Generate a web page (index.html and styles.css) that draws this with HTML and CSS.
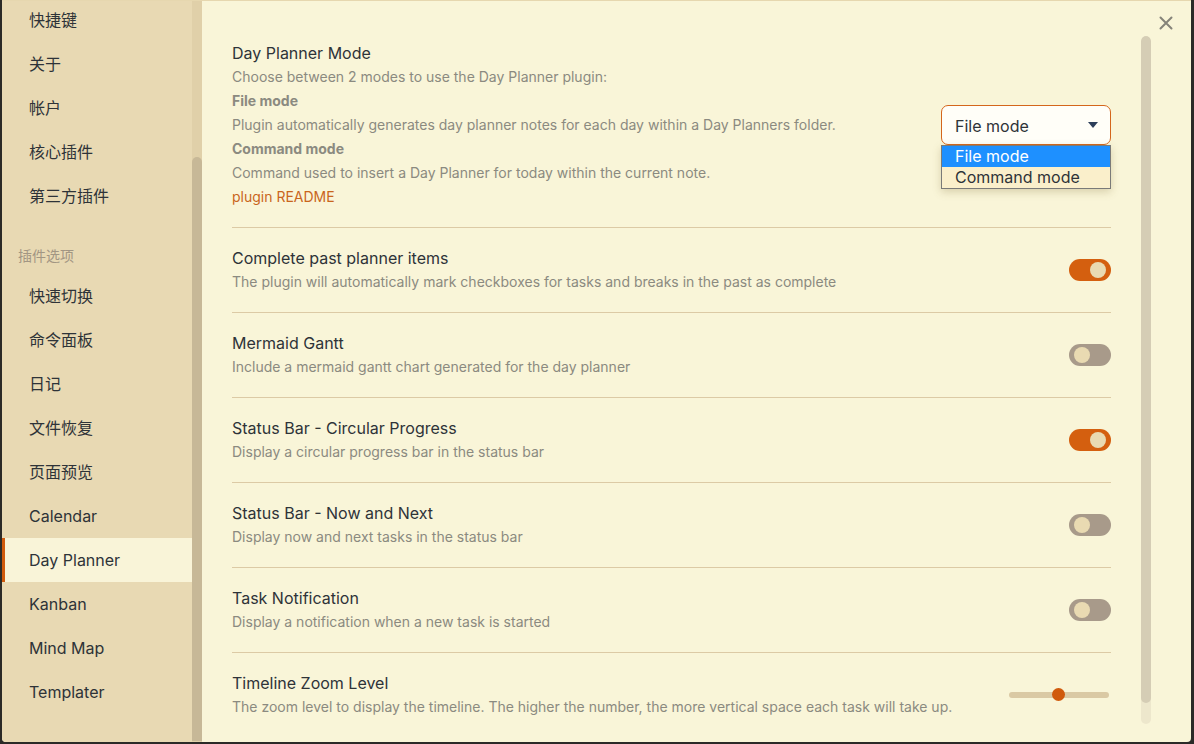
FILE: index.html
```html
<!DOCTYPE html>
<html>
<head>
<meta charset="utf-8">
<link rel="stylesheet" href="styles.css">
</head>
<body>
<div class="modal">
  <aside class="sidebar">
    <nav class="nav">
      <div class="nav-item">快捷键</div>
      <div class="nav-item">关于</div>
      <div class="nav-item">帐户</div>
      <div class="nav-item">核心插件</div>
      <div class="nav-item">第三方插件</div>
      <div class="nav-header">插件选项</div>
      <div class="nav-item">快速切换</div>
      <div class="nav-item">命令面板</div>
      <div class="nav-item">日记</div>
      <div class="nav-item">文件恢复</div>
      <div class="nav-item">页面预览</div>
      <div class="nav-item">Calendar</div>
      <div class="nav-item active">Day Planner</div>
      <div class="nav-item">Kanban</div>
      <div class="nav-item">Mind Map</div>
      <div class="nav-item">Templater</div>
    </nav>
    <div class="side-scroll"><div class="side-thumb"></div></div>
  </aside>
  <main class="main">
    <div class="content">
      <div class="setting first">
        <div class="info">
          <div class="name">Day Planner Mode</div>
          <div class="desc">
            <div>Choose between 2 modes to use the Day Planner plugin:</div>
            <div class="strong">File mode</div>
            <div>Plugin automatically generates day planner notes for each day within a Day Planners folder.</div>
            <div class="strong">Command mode</div>
            <div>Command used to insert a Day Planner for today within the current note.</div>
            <div class="link">plugin README</div>
          </div>
        </div>
        <div class="control">
          <div class="select">
            <span>File mode</span>
            <svg class="caret" width="10" height="6" viewBox="0 0 10 6"><path d="M0 0 H10 L5 6 Z" fill="#2c3e5a"/></svg>
            <div class="options">
              <div class="opt sel">File mode</div>
              <div class="opt">Command mode</div>
            </div>
          </div>
        </div>
      </div>
      <div class="setting">
        <div class="info">
          <div class="name">Complete past planner items</div>
          <div class="desc">The plugin will automatically mark checkboxes for tasks and breaks in the past as complete</div>
        </div>
        <div class="control"><div class="toggle on"><i></i></div></div>
      </div>
      <div class="setting">
        <div class="info">
          <div class="name">Mermaid Gantt</div>
          <div class="desc">Include a mermaid gantt chart generated for the day planner</div>
        </div>
        <div class="control"><div class="toggle"><i></i></div></div>
      </div>
      <div class="setting">
        <div class="info">
          <div class="name">Status Bar - Circular Progress</div>
          <div class="desc">Display a circular progress bar in the status bar</div>
        </div>
        <div class="control"><div class="toggle on"><i></i></div></div>
      </div>
      <div class="setting">
        <div class="info">
          <div class="name">Status Bar - Now and Next</div>
          <div class="desc">Display now and next tasks in the status bar</div>
        </div>
        <div class="control"><div class="toggle"><i></i></div></div>
      </div>
      <div class="setting">
        <div class="info">
          <div class="name">Task Notification</div>
          <div class="desc">Display a notification when a new task is started</div>
        </div>
        <div class="control"><div class="toggle"><i></i></div></div>
      </div>
      <div class="setting">
        <div class="info">
          <div class="name">Timeline Zoom Level</div>
          <div class="desc">The zoom level to display the timeline. The higher the number, the more vertical space each task will take up.</div>
        </div>
        <div class="control"><div class="slider"><i></i></div></div>
      </div>
    </div>
    <div class="main-scroll"><div class="main-thumb"></div></div>
    <svg class="close" width="14" height="14" viewBox="0 0 14 14"><path d="M1.5 1.5 L12.5 12.5 M12.5 1.5 L1.5 12.5" stroke="#858379" stroke-width="2" stroke-linecap="round"/></svg>
  </main>
</div>
</body>
</html>
```
FILE: styles.css
```css
html, body {
  margin: 0;
  padding: 0;
  background: #2b2a27;
  width: 1194px;
  height: 744px;
  overflow: hidden;
}
.modal {
  display: flex;
  margin: 0 3px 0 2px;
  height: 742px;
  background: #f9f5d8;
  border-top: 1px solid #e6d7af;
  box-sizing: border-box;
  border-radius: 0 0 4px 4px;
  overflow: hidden;
  font-family: Inter, "Noto Sans CJK SC", sans-serif;
  color: #2e3338;
}
.sidebar {
  width: 200px;
  flex: none;
  display: flex;
  background: #e8d9b3;
}
.nav {
  flex: 1;
  margin-top: -3px;
}
.nav-item {
  height: 44px;
  line-height: 44px;
  font-size: 16px;
  padding-left: 27px;
  box-sizing: border-box;
}
.nav-item.active {
  background: #f9f4d8;
  border-left: 3px solid #d05a0c;
  padding-left: 24px;
}
.nav-header {
  font-size: 14px;
  color: #a29683;
  padding-left: 16px;
  height: 56px;
  line-height: 20px;
  padding-top: 28px;
  box-sizing: border-box;
}
.side-scroll {
  width: 10px;
  flex: none;
  background: #e0d0a9;
  display: flex;
  flex-direction: column;
  justify-content: flex-end;
}
.side-thumb {
  height: 584px;
  margin-bottom: 1px;
  background: #c7b897;
  border-radius: 5px 5px 0 0;
}
.main {
  flex: 1;
  display: flex;
  position: relative;
  padding-left: 30px;
}
.content {
  width: 879px;
  flex: none;
  padding-top: 22px;
}
.setting {
  display: flex;
  align-items: center;
  padding: 18px 0;
  border-top: 1px solid #dccaa5;
}
.setting.first {
  border-top: none;
}
.info {
  flex: 1;
}
.name {
  font-size: 16px;
  line-height: 24px;
  color: #2e3338;
}
.desc {
  font-size: 14px;
  line-height: 24px;
  color: #8b8a80;
}
.desc .strong {
  font-weight: 700;
}
.desc .link {
  color: #c9651c;
}
.control {
  flex: none;
  display: flex;
  align-items: center;
}
.select {
  position: relative;
  width: 170px;
  height: 40px;
  box-sizing: border-box;
  border: 1px solid #d4661c;
  border-radius: 7px;
  background: #fffef8;
  display: flex;
  align-items: center;
  justify-content: space-between;
  padding: 0 12px 0 13px;
  font-size: 16px;
  color: #2e3338;
}
.select span {
  padding-top: 2px;
}
.options {
  position: absolute;
  left: -1px;
  top: 39px;
  width: 170px;
  box-sizing: border-box;
  border: 1px solid #7a7a78;
  background: #faefcb;
  box-shadow: 0 3px 8px rgba(120, 100, 40, 0.25);
}
.opt {
  height: 21px;
  line-height: 21px;
  padding-left: 13px;
  font-size: 16px;
  color: #2e3338;
}
.opt.sel {
  background: #1e90ff;
  color: #ffffff;
}
.toggle {
  width: 42px;
  height: 22px;
  border-radius: 11px;
  background: #a89a8a;
  position: relative;
}
.toggle i {
  position: absolute;
  top: 3px;
  left: 5px;
  width: 16px;
  height: 16px;
  border-radius: 50%;
  background: #e9dab2;
}
.toggle.on {
  background: #d45f0f;
}
.toggle.on i {
  left: 21px;
}
.slider {
  width: 100px;
  height: 6px;
  border-radius: 3px;
  background: #dac9a4;
  margin-right: 2px;
  position: relative;
}
.slider i {
  position: absolute;
  left: 43px;
  top: -4px;
  width: 13px;
  height: 13px;
  border-radius: 50%;
  background: #d05a0c;
}
.main-scroll {
  width: 10px;
  flex: none;
  margin: 35px 0 18px 30px;
  border-radius: 5px;
  background: #ede7cc;
  overflow: hidden;
}
.main-thumb {
  height: 667px;
  background: #d5cdb5;
  border-radius: 5px;
}
.close {
  position: absolute;
  right: 18px;
  top: 15px;
}
```
